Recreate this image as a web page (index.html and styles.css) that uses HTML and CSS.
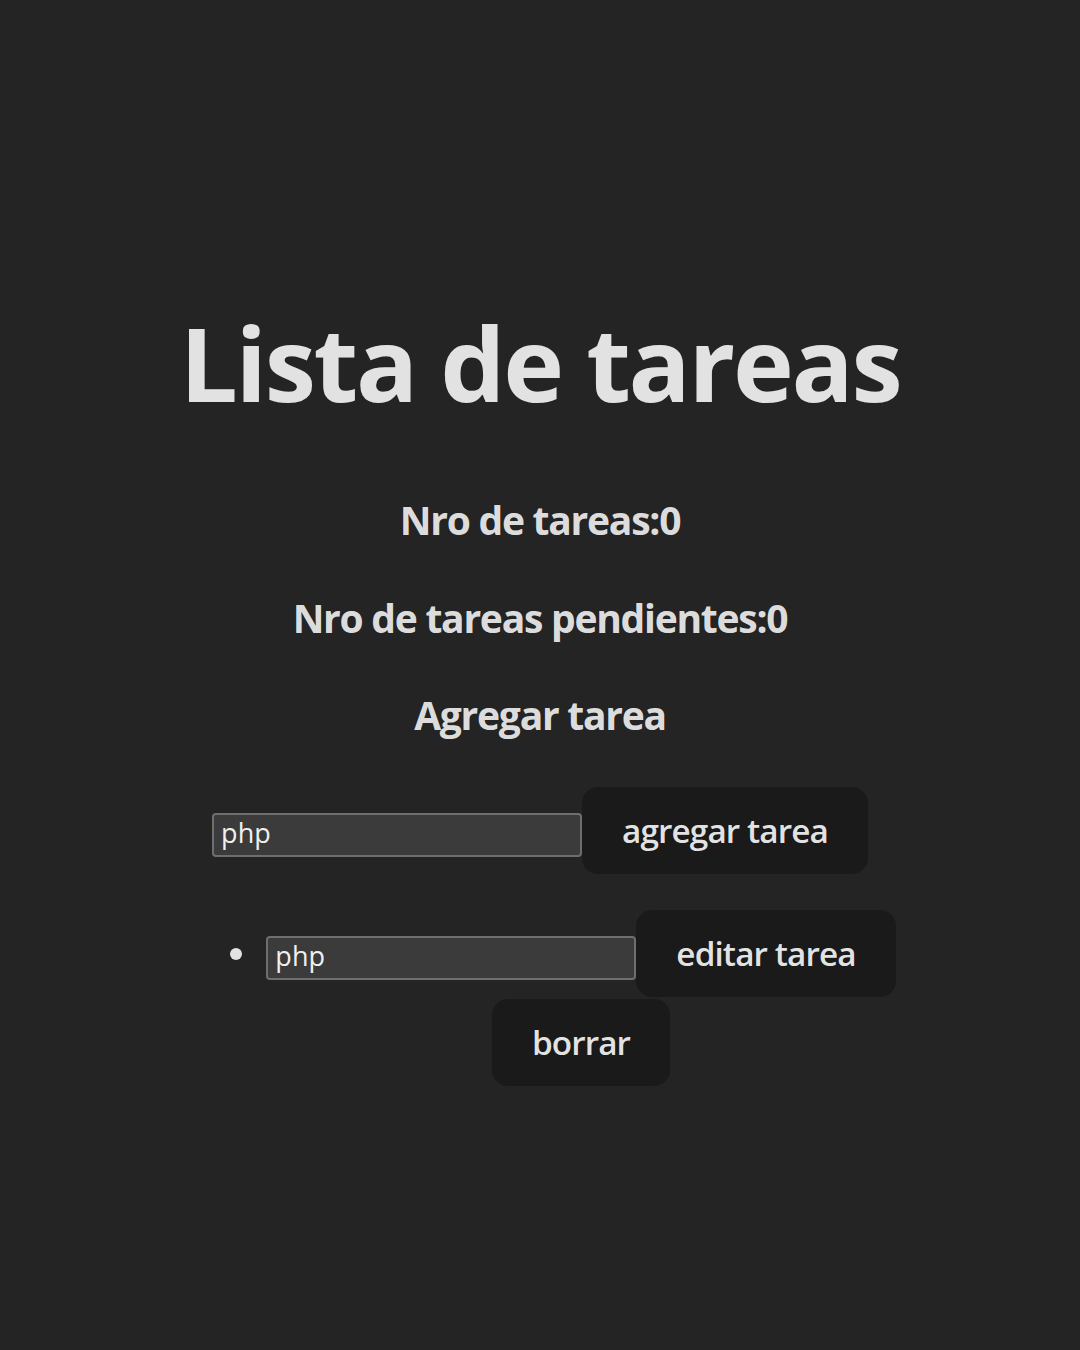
FILE: index.html
```html
<!DOCTYPE html>
<html lang="es">
<head>
<meta charset="utf-8">
<title>Lista de tareas</title>
<link rel="stylesheet" href="styles.css">
</head>
<body>
<div class="app">
  <h1 class="title">Lista de tareas</h1>
  <h3 class="stat">Nro de tareas:0</h3>
  <h3 class="stat">Nro de tareas pendientes:0</h3>
  <h3 class="stat">Agregar tarea</h3>
  <div class="add-row"><input class="field" type="text" value="php"><button class="btn">agregar tarea</button></div>
  <ul class="tasks">
    <li class="task"><input class="field" type="text" value="php"><button class="btn">editar tarea</button><button class="btn">borrar</button></li>
  </ul>
</div>
</body>
</html>
```

FILE: styles.css
```css
html, body {
  margin: 0;
  padding: 0;
}
body {
  background: #242424;
  color: rgba(255, 255, 255, 0.87);
  font-family: "Open Sans", "Noto Sans", sans-serif;
  font-size: 33.3px;
  line-height: 1.5;
  min-height: 1350px;
}
.app {
  padding-top: 306px;
  text-align: center;
}
.title {
  font-size: 103px;
  font-weight: 700;
  line-height: 1.1;
  margin: 0 0 72px;
  letter-spacing: -2.3px;
}
.stat {
  font-size: 39px;
  font-weight: 700;
  line-height: 1.5;
  margin: 39px 0;
  letter-spacing: -1.25px;
}
.stat:first-of-type {
  margin-top: 0;
}
.add-row {
  display: flex;
  justify-content: center;
  align-items: baseline;
  margin-top: 42px;
}
.field {
  box-sizing: border-box;
  width: 370px;
  height: 44px;
  padding: 0 7px 6px;
  border: 2px solid #6e6e6e;
  border-radius: 4px;
  background: #3b3b3b;
  color: #f0f0f0;
  font-family: "Open Sans", "Noto Sans", sans-serif;
  font-size: 27px;
  vertical-align: baseline;
}
.btn {
  border: 2px solid transparent;
  border-radius: 16px;
  background: #1a1a1a;
  color: rgba(255, 255, 255, 0.9);
  font-family: "Open Sans", "Noto Sans", sans-serif;
  font-size: 33.3px;
  font-weight: 600;
  line-height: 45px;
  padding: 19px 38px;
  letter-spacing: -0.9px;
  cursor: pointer;
}
.tasks {
  width: 640px;
  margin: 36px auto 0;
  padding: 0 0 0 82px;
  list-style: disc outside;
}
.task {
  text-align: center;
  line-height: 1.5;
}
.task .btn {
  margin-bottom: 2px;
}
```
